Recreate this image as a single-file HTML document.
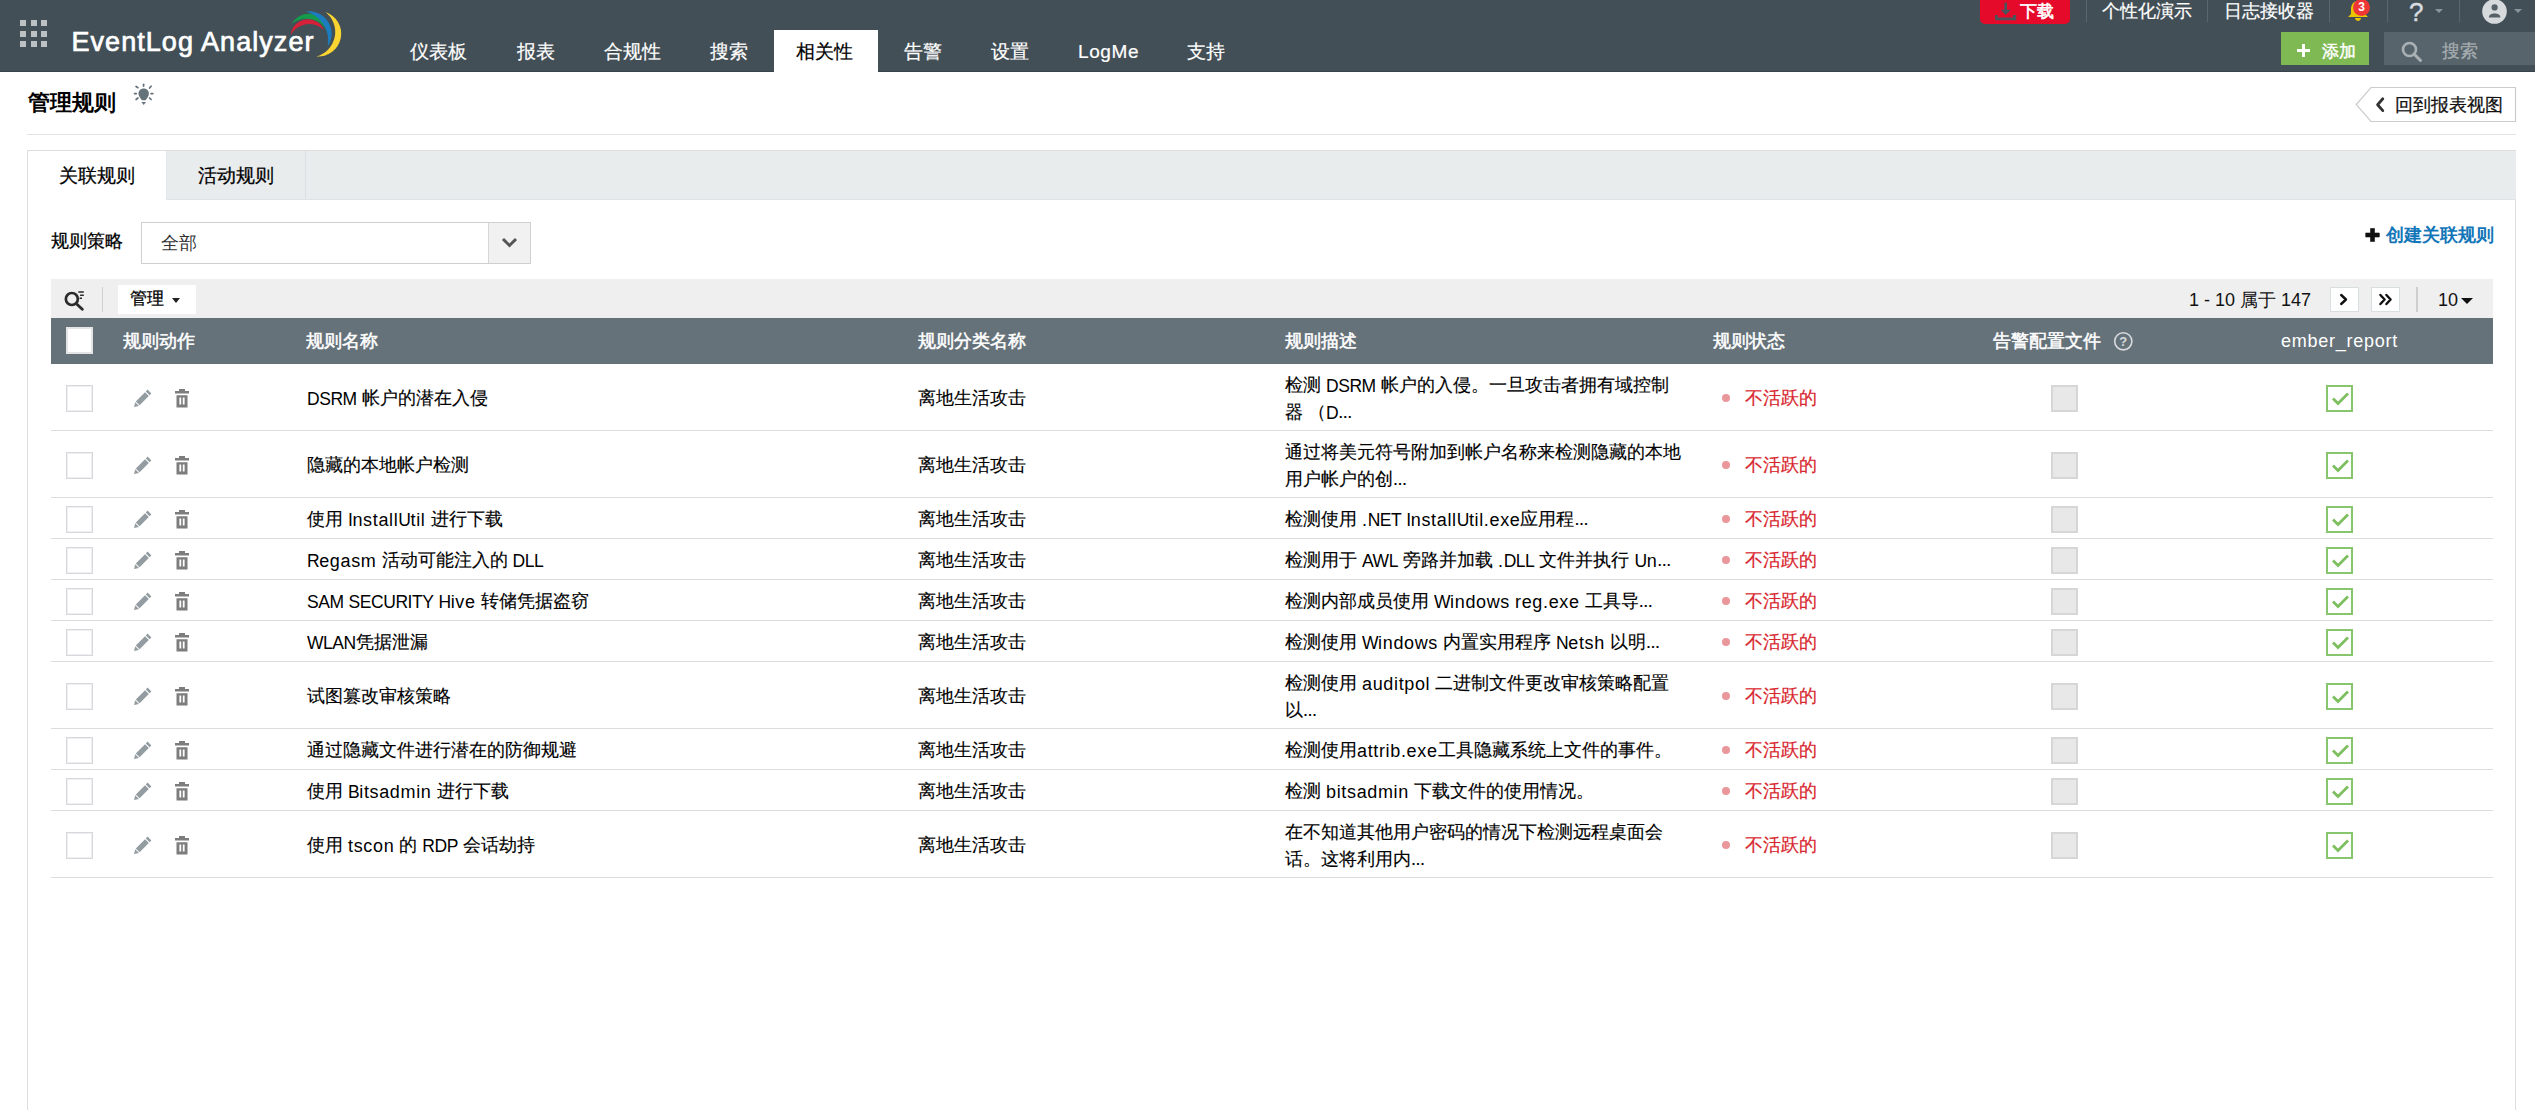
<!DOCTYPE html>
<html><head><meta charset="utf-8">
<style>
*{box-sizing:border-box;margin:0;padding:0}
html,body{width:2535px;height:1110px;overflow:hidden;background:#fff;font-family:"Liberation Sans",sans-serif;color:#222}
.a{position:absolute;white-space:nowrap}
#hdr{position:absolute;left:0;top:0;width:2535px;height:72px;background:#434f56;border-bottom:1px solid #38434a}
.dot{position:absolute;width:6px;height:6px;background:#bcc1c4}
.nav{position:absolute;top:30px;height:42px;font-size:19px;line-height:44px;color:#fff;white-space:nowrap;-webkit-text-stroke:0.2px currentColor}
.nav.act{background:#fff;color:#000}
.sep{position:absolute;top:0;width:1px;height:22px;background:#5a656d}
.tl{font-size:18px;line-height:22px;color:#fff;-webkit-text-stroke:0.2px currentColor}
.t18{font-size:18px;line-height:22px;-webkit-text-stroke:0.25px currentColor}
#panel{position:absolute;left:27px;top:150px;width:2489px;height:1000px;border:1px solid #dedede;background:#fff}
#tabs{position:absolute;left:138px;top:0;width:2350px;height:49px;background:#e9eced;border-bottom:1px solid #dfe3e5;border-left:1px solid #e3e6e8}
.hd{position:absolute;top:0;font-size:18px;line-height:46px;color:#fff;white-space:nowrap;-webkit-text-stroke:0.5px #fff}
.row{position:absolute;left:51px;width:2442px;border-bottom:1px solid #dcdcdc}
.cb{position:absolute;left:15px;width:27px;height:27px;border:1px solid #d9d7db;box-shadow:inset 0 0 0 1px #efeef0;background:#fff}
.ed{position:absolute;left:83px}
.tr{position:absolute;left:124px}
.l{position:relative;top:0.5px;-webkit-text-stroke:0}.u{font-style:normal;font-size:17.5px;letter-spacing:-0.45px}.w{font-weight:normal;letter-spacing:0.65px}.d{font-weight:normal;letter-spacing:-0.5px}
.c{position:absolute;font-size:18px;line-height:27px;color:#000;white-space:nowrap;-webkit-text-stroke:0.15px #000}
.st{position:absolute;left:1694px;font-size:18px;line-height:27px;color:#d8262e;white-space:nowrap;-webkit-text-stroke:0.2px #d8262e}
.st:before{content:"";position:absolute;left:-23px;top:9px;width:8px;height:8px;border-radius:50%;background:#ea979b}
.ac{position:absolute;left:2000px;width:27px;height:27px;border:2px solid #d6d6d6;background:#e8e8e8}
.gc{position:absolute;left:2275px;width:27px;height:27px;border:2px solid #88c66e;background:#fff}
</style></head><body>
<div id="hdr">
  <div class="dot" style="left:20px;top:20px"></div><div class="dot" style="left:30.5px;top:20px"></div><div class="dot" style="left:41px;top:20px"></div>
  <div class="dot" style="left:20px;top:30.5px"></div><div class="dot" style="left:30.5px;top:30.5px"></div><div class="dot" style="left:41px;top:30.5px"></div>
  <div class="dot" style="left:20px;top:41px"></div><div class="dot" style="left:30.5px;top:41px"></div><div class="dot" style="left:41px;top:41px"></div>
  <div class="a" id="logo" style="left:71.5px;top:25px;font-size:27px;line-height:34px;color:#fff;-webkit-text-stroke:0.7px #fff;letter-spacing:1.05px">EventLog Analyzer</div>
  <svg class="a" style="left:280px;top:5px" width="70" height="60" viewBox="0 0 70 60">
    <path d="M10.8 29.7 A17.2 17.2 0 0 1 43.8 24.9 A21 21 0 0 0 10.8 29.7Z" fill="#d4213a"/>
    <path d="M11.6 18.9 A19.8 19.8 0 0 1 48.6 29.5 A23.5 23.5 0 0 0 11.6 18.9Z" fill="#159a4c"/>
    <path d="M25.9 6.5 A22.5 22.5 0 0 1 47.6 41.6 A30 30 0 0 0 25.9 6.5Z" fill="#1b7dc0"/>
    <path d="M45.4 7 A22.8 22.8 0 0 1 36.2 51.4 A25.2 25.2 0 0 0 45.4 7Z" fill="#fbd432"/>
  </svg>
  <div class="nav" style="left:388px;padding:0 22px">仪表板</div>
  <div class="nav" style="left:495px;padding:0 22px">报表</div>
  <div class="nav" style="left:582px;padding:0 22px">合规性</div>
  <div class="nav" style="left:688px;padding:0 22px">搜索</div>
  <div class="nav act" style="left:774px;width:104px;padding:0 22px">相关性</div>
  <div class="nav" style="left:882px;padding:0 22px">告警</div>
  <div class="nav" style="left:969px;padding:0 22px">设置</div>
  <div class="nav" style="left:1056px;padding:0 22px;letter-spacing:0.6px">LogMe</div>
  <div class="nav" style="left:1165px;padding:0 22px">支持</div>

  <div class="a" style="left:1980px;top:0;width:90px;height:24px;background:#e5092a;border-radius:0 0 5px 5px"></div>
  <svg class="a" style="left:1995px;top:2px" width="22" height="19" viewBox="0 0 22 19">
    <rect x="9.4" y="0.6" width="2.6" height="8" fill="#4a545b"/><path d="M5.8 7.7 L16 7.7 L10.7 12.9Z" fill="#4a545b"/>
    <path d="M0.1 12.9 H2.7 V15.4 H18 V12.9 H21.2 V18.2 H0.1Z" fill="#4a545b"/>
  </svg>
  <div class="a tl" style="left:2020px;top:0px;font-size:16.5px;-webkit-text-stroke:0.6px #fff">下载</div>
  <div class="sep" style="left:2086px"></div>
  <div class="a tl" style="left:2102px;top:0px">个性化演示</div>
  <div class="sep" style="left:2207px"></div>
  <div class="a tl" style="left:2224px;top:0px">日志接收器</div>
  <div class="sep" style="left:2329px"></div>
  <svg class="a" style="left:2346px;top:0px" width="24" height="22" viewBox="0 0 24 22">
    <path d="M11 1 C 6 2, 5 6, 5 10 L 5 14 L 2 17 L 22 17 L 19 14 L 19 10 C 19 6, 17 2, 13 1Z" fill="#eac600"/>
    <path d="M9 18 H15 C15 20, 13 21, 12 21 C 11 21, 9 20, 9 18Z" fill="#eac600"/>
  </svg>
  <div class="a" style="left:2353px;top:-1px;width:17px;height:17px;border-radius:50%;background:#ee3636;color:#fff;font-size:12px;font-weight:bold;line-height:17px;text-align:center">3</div>
  <div class="sep" style="left:2387px"></div>
  <div class="a" style="left:2409px;top:-1px;font-size:26px;line-height:27px;color:#d9dde0;-webkit-text-stroke:0.4px #d9dde0">?</div>
  <div class="a" style="left:2435px;top:9px;width:0;height:0;border-left:4px solid transparent;border-right:4px solid transparent;border-top:4px solid #8a949a"></div>
  <div class="sep" style="left:2459px"></div>
  <svg class="a" style="left:2482px;top:-1px" width="25" height="25" viewBox="0 0 25 25">
    <circle cx="12.5" cy="12.5" r="12.3" fill="#d6dadd"/>
    <circle cx="12.6" cy="8.4" r="3.1" fill="#566067"/>
    <path d="M6.8 18.6 C 6.8 15.6, 9.4 14.4, 12.6 14.4 C 15.8 14.4, 18.4 15.6, 18.4 18.6Z" fill="#566067"/>
  </svg>
  <div class="a" style="left:2514px;top:9px;width:0;height:0;border-left:4px solid transparent;border-right:4px solid transparent;border-top:4px solid #8a949a"></div>

  <div class="a" style="left:2281px;top:32px;width:88px;height:33px;background:#7fb953"></div>
  <div class="a" style="left:2297px;top:49px;width:13px;height:3px;background:#fff"></div>
  <div class="a" style="left:2302px;top:44px;width:3px;height:13px;background:#fff"></div>
  <div class="a tl" style="left:2321.5px;top:39.5px;font-size:16.5px;-webkit-text-stroke:0.45px #fff">添加</div>
  <div class="a" style="left:2384px;top:32px;width:151px;height:33px;background:#58646b"></div>
  <svg class="a" style="left:2401px;top:41px" width="22" height="22" viewBox="0 0 22 22">
    <circle cx="8.5" cy="8.5" r="6.5" fill="none" stroke="#aab1b5" stroke-width="2.6"/>
    <path d="M13 13 L19.5 19.5" stroke="#aab1b5" stroke-width="3" stroke-linecap="round"/>
  </svg>
  <div class="a tl" style="left:2441.5px;top:40px;color:#a7aeb2">搜索</div>
</div>

<div class="a" style="left:27.5px;top:89px;font-size:22px;line-height:28px;font-weight:bold;color:#000">管理规则</div>
<svg class="a" style="left:133px;top:82px" width="22" height="25" viewBox="0 0 22 25">
  <g stroke="#67737b" stroke-width="1.7" stroke-linecap="round">
    <path d="M10.6 2.3 V4.1"/><path d="M1.5 11.6 H3.3"/><path d="M18 11.6 H19.8"/>
    <path d="M3.1 4.5 L4.9 5.7"/><path d="M18.1 4.2 L16.6 6"/><path d="M3.1 17.5 L4.9 16"/><path d="M18.1 17.5 L16.6 16"/>
  </g>
  <path d="M10.7 6.4 C 7.7 6.4, 5.5 8.6, 5.5 11.4 C 5.5 13.6, 6.6 14.6, 7.6 16.4 L 8.9 18.2 H 12.6 L 13.9 16.4 C 14.9 14.6, 15.9 13.6, 15.9 11.4 C 15.9 8.6, 13.7 6.4, 10.7 6.4 Z" fill="#67737b"/>
  <path d="M8.4 19.9 H13 L10.7 23.1Z" fill="#67737b"/>
</svg>
<div class="a" style="left:27px;top:134px;width:2489px;height:1px;background:#e2e2e2"></div>
<svg class="a" style="left:2355px;top:86px" width="162" height="37" viewBox="0 0 162 37">
  <path d="M16 1.5 H160.5 V35.5 H16 L1.2 18.5Z" fill="#fff" stroke="#cccccc" stroke-width="1.2"/>
  <path d="M27.8 12.8 L22.6 18.7 L27.8 24.6" fill="none" stroke="#333" stroke-width="2.8" stroke-linecap="round" stroke-linejoin="round"/>
</svg>
<div class="a t18" style="left:2395px;top:94px;color:#111">回到报表视图</div>

<div id="panel">
  <div id="tabs"></div>
  <div class="a" style="left:277px;top:0;width:1px;height:48px;background:#dcdfe1"></div>
  <div class="a" style="left:31px;top:14px;font-size:19px;line-height:22px;color:#000;-webkit-text-stroke:0.25px #000">关联规则</div>
  <div class="a" style="left:170px;top:14px;font-size:19px;line-height:22px;color:#000;-webkit-text-stroke:0.25px #000">活动规则</div>
</div>

<div class="a t18" style="left:51px;top:230px;color:#000">规则策略</div>
<div class="a" style="left:141px;top:222px;width:390px;height:42px;border:1px solid #cfcfcf;background:#fff"></div>
<div class="a" style="left:488px;top:223px;width:42px;height:40px;background:#f1f1f1;border-left:1px solid #d6d6d6"></div>
<svg class="a" style="left:501px;top:237px" width="17" height="11" viewBox="0 0 17 11"><path d="M2 2 L8.5 8.5 L15 2" fill="none" stroke="#555" stroke-width="3"/></svg>
<div class="a t18" style="left:161px;top:232px;color:#333;-webkit-text-stroke:0">全部</div>

<svg class="a" style="left:2365px;top:228px" width="15" height="14" viewBox="0 0 15 14"><path d="M5.5 0.5 H9.5 V5 H14.3 V9 H9.5 V13.6 H5.5 V9 H0.7 V5 H5.5Z" fill="#111" stroke="#111" stroke-width="0.6" stroke-linejoin="round"/></svg>
<div class="a t18" style="left:2386px;top:224px;color:#1276b8;font-weight:bold;-webkit-text-stroke:0">创建关联规则</div>

<div class="a" style="left:51px;top:279px;width:2442px;height:39px;background:#efefef"></div>
<svg class="a" style="left:63px;top:290px" width="23" height="22" viewBox="0 0 23 22">
  <circle cx="8.85" cy="9" r="6" fill="none" stroke="#2b2b2b" stroke-width="2.7"/>
  <path d="M14.2 14.5 L19.3 19.2" stroke="#2b2b2b" stroke-width="2.9" stroke-linecap="round"/>
  <path d="M15.3 2.1 H20.8 M17.1 5.2 H20.8 M16.6 8.2 H19" stroke="#2b2b2b" stroke-width="1.5"/>
</svg>
<div class="a" style="left:102px;top:287px;width:1px;height:25px;background:#cfcfcf"></div>
<div class="a" style="left:118px;top:285px;width:78px;height:29px;background:#fff"></div>
<div class="a" style="left:130px;top:288px;font-size:17px;line-height:22px;color:#000;-webkit-text-stroke:0.3px #000">管理</div>
<div class="a" style="left:172px;top:298px;width:0;height:0;border-left:4px solid transparent;border-right:4px solid transparent;border-top:5px solid #222"></div>

<div class="a t18" style="left:2189px;top:289px;color:#111;-webkit-text-stroke:0">1 - 10 属于 147</div>
<div class="a" style="left:2330px;top:287px;width:29px;height:25px;background:#fff;border:1px solid #d9dee0"></div>
<svg class="a" style="left:2338px;top:293px" width="12" height="13" viewBox="0 0 12 13"><path d="M3.2 2 L8 6.5 L3.2 11" fill="none" stroke="#111" stroke-width="2.4" stroke-linecap="round" stroke-linejoin="round"/></svg>
<div class="a" style="left:2371px;top:287px;width:29px;height:25px;background:#fff;border:1px solid #d9dee0"></div>
<svg class="a" style="left:2378px;top:293px" width="16" height="13" viewBox="0 0 16 13"><path d="M2.4 2 L6.6 6.5 L2.4 11 M8.4 2 L12.6 6.5 L8.4 11" fill="none" stroke="#111" stroke-width="2.4" stroke-linecap="round" stroke-linejoin="round"/></svg>
<div class="a" style="left:2416px;top:287px;width:2px;height:25px;background:#cfcfcf"></div>
<div class="a t18" style="left:2438px;top:289px;color:#111;-webkit-text-stroke:0">10</div>
<div class="a" style="left:2461px;top:298px;width:0;height:0;border-left:6px solid transparent;border-right:6px solid transparent;border-top:6px solid #111"></div>

<div class="a" style="left:51px;top:318px;width:2442px;height:46px;background:#66727a"></div>
<div class="a" style="left:66px;top:327px;width:27px;height:27px;background:#fff;border:2px solid #e4e4e4"></div>
<div class="hd" style="left:123px;top:318px">规则动作</div>
<div class="hd" style="left:306px;top:318px">规则名称</div>
<div class="hd" style="left:918px;top:318px">规则分类名称</div>
<div class="hd" style="left:1285px;top:318px">规则描述</div>
<div class="hd" style="left:1713px;top:318px">规则状态</div>
<div class="hd" style="left:1993px;top:318px">告警配置文件</div>
<svg class="a" style="left:2113px;top:331px" width="21" height="21" viewBox="0 0 21 21"><circle cx="10.3" cy="10.3" r="8.6" fill="none" stroke="#d7dbdd" stroke-width="1.6"/><text x="10.3" y="15" text-anchor="middle" font-family="Liberation Sans" font-weight="bold" font-size="13" fill="#d7dbdd">?</text></svg>
<div class="hd" style="left:2281px;top:318px;-webkit-text-stroke:0;letter-spacing:0.75px">ember_report</div>

<div class="row" style="top:364px;height:67px"><div class="cb" style="top:21px"></div><svg class="ed" width="18" height="18" viewBox="0 0 18 18" style="top:25px"><path d="M13.6 0.6 L17.4 4.4 L15.6 6.2 L11.8 2.4Z M11 3.2 L14.8 7 L5.6 16.2 L1.8 12.4Z M1.2 13.2 L5 17 L0 18Z" fill="#939ca1"/></svg><svg class="tr" width="14" height="19" viewBox="0 0 14 19" style="top:25px"><path d="M4 0 H10 V2 H14 V4.6 H0 V2 H4Z" fill="#7d7d7d"/><path d="M1.5 6.2 H12.5 V18.4 H1.5Z M4.4 8.6 V15.6 H6.2 V8.6Z M7.8 8.6 V15.6 H9.6 V8.6Z" fill="#7d7d7d" fill-rule="evenodd"/></svg><div class="c" style="left:256px;top:21px"><span class="l"><i class="u">DSRM</i> </span>帐户的潜在入侵</div><div class="c" style="left:867px;top:21px">离地生活攻击</div><div class="c" style="left:1234px;top:8px">检测 <span class="l"><i class="u">DSRM</i> </span>帐户的入侵。一旦攻击者拥有域控制<br>器 （<span class="l"><i class="u">D</i></span><b class="d">...</b></div><div class="st" style="top:21px">不活跃的</div><div class="ac" style="top:21px"></div><div class="gc" style="top:21px"></div><svg class="a" style="left:2279px;top:24px" width="21" height="21" viewBox="0 0 21 21"><path d="M3 10.5 L8 15.5 L18 5.5" fill="none" stroke="#7dbf5e" stroke-width="2.7"/></svg></div>
<div class="row" style="top:431px;height:67px"><div class="cb" style="top:21px"></div><svg class="ed" width="18" height="18" viewBox="0 0 18 18" style="top:25px"><path d="M13.6 0.6 L17.4 4.4 L15.6 6.2 L11.8 2.4Z M11 3.2 L14.8 7 L5.6 16.2 L1.8 12.4Z M1.2 13.2 L5 17 L0 18Z" fill="#939ca1"/></svg><svg class="tr" width="14" height="19" viewBox="0 0 14 19" style="top:25px"><path d="M4 0 H10 V2 H14 V4.6 H0 V2 H4Z" fill="#7d7d7d"/><path d="M1.5 6.2 H12.5 V18.4 H1.5Z M4.4 8.6 V15.6 H6.2 V8.6Z M7.8 8.6 V15.6 H9.6 V8.6Z" fill="#7d7d7d" fill-rule="evenodd"/></svg><div class="c" style="left:256px;top:21px">隐藏的本地帐户检测</div><div class="c" style="left:867px;top:21px">离地生活攻击</div><div class="c" style="left:1234px;top:8px">通过将美元符号附加到帐户名称来检测隐藏的本地<br>用户帐户的创<b class="d">...</b></div><div class="st" style="top:21px">不活跃的</div><div class="ac" style="top:21px"></div><div class="gc" style="top:21px"></div><svg class="a" style="left:2279px;top:24px" width="21" height="21" viewBox="0 0 21 21"><path d="M3 10.5 L8 15.5 L18 5.5" fill="none" stroke="#7dbf5e" stroke-width="2.7"/></svg></div>
<div class="row" style="top:498px;height:41px"><div class="cb" style="top:8px"></div><svg class="ed" width="18" height="18" viewBox="0 0 18 18" style="top:12px"><path d="M13.6 0.6 L17.4 4.4 L15.6 6.2 L11.8 2.4Z M11 3.2 L14.8 7 L5.6 16.2 L1.8 12.4Z M1.2 13.2 L5 17 L0 18Z" fill="#939ca1"/></svg><svg class="tr" width="14" height="19" viewBox="0 0 14 19" style="top:12px"><path d="M4 0 H10 V2 H14 V4.6 H0 V2 H4Z" fill="#7d7d7d"/><path d="M1.5 6.2 H12.5 V18.4 H1.5Z M4.4 8.6 V15.6 H6.2 V8.6Z M7.8 8.6 V15.6 H9.6 V8.6Z" fill="#7d7d7d" fill-rule="evenodd"/></svg><div class="c" style="left:256px;top:8px">使用 <span class="l"><i class="u">I</i><b class="w">nstall</b><i class="u">U</i><b class="w">til</b> </span>进行下载</div><div class="c" style="left:867px;top:8px">离地生活攻击</div><div class="c" style="left:1234px;top:8px">检测使用 <span class="l"><b class="w">.</b><i class="u">NET</i> <i class="u">I</i><b class="w">nstall</b><i class="u">U</i><b class="w">til.exe</b></span>应用程<b class="d">...</b></div><div class="st" style="top:8px">不活跃的</div><div class="ac" style="top:8px"></div><div class="gc" style="top:8px"></div><svg class="a" style="left:2279px;top:11px" width="21" height="21" viewBox="0 0 21 21"><path d="M3 10.5 L8 15.5 L18 5.5" fill="none" stroke="#7dbf5e" stroke-width="2.7"/></svg></div>
<div class="row" style="top:539px;height:41px"><div class="cb" style="top:8px"></div><svg class="ed" width="18" height="18" viewBox="0 0 18 18" style="top:12px"><path d="M13.6 0.6 L17.4 4.4 L15.6 6.2 L11.8 2.4Z M11 3.2 L14.8 7 L5.6 16.2 L1.8 12.4Z M1.2 13.2 L5 17 L0 18Z" fill="#939ca1"/></svg><svg class="tr" width="14" height="19" viewBox="0 0 14 19" style="top:12px"><path d="M4 0 H10 V2 H14 V4.6 H0 V2 H4Z" fill="#7d7d7d"/><path d="M1.5 6.2 H12.5 V18.4 H1.5Z M4.4 8.6 V15.6 H6.2 V8.6Z M7.8 8.6 V15.6 H9.6 V8.6Z" fill="#7d7d7d" fill-rule="evenodd"/></svg><div class="c" style="left:256px;top:8px"><span class="l"><i class="u">R</i><b class="w">egasm</b> </span>活动可能注入的 <span class="l"><i class="u">DLL</i></span></div><div class="c" style="left:867px;top:8px">离地生活攻击</div><div class="c" style="left:1234px;top:8px">检测用于 <span class="l"><i class="u">AWL</i> </span>旁路并加载 <span class="l"><b class="w">.</b><i class="u">DLL</i> </span>文件并执行 <span class="l"><i class="u">U</i><b class="w">n</b></span><b class="d">...</b></div><div class="st" style="top:8px">不活跃的</div><div class="ac" style="top:8px"></div><div class="gc" style="top:8px"></div><svg class="a" style="left:2279px;top:11px" width="21" height="21" viewBox="0 0 21 21"><path d="M3 10.5 L8 15.5 L18 5.5" fill="none" stroke="#7dbf5e" stroke-width="2.7"/></svg></div>
<div class="row" style="top:580px;height:41px"><div class="cb" style="top:8px"></div><svg class="ed" width="18" height="18" viewBox="0 0 18 18" style="top:12px"><path d="M13.6 0.6 L17.4 4.4 L15.6 6.2 L11.8 2.4Z M11 3.2 L14.8 7 L5.6 16.2 L1.8 12.4Z M1.2 13.2 L5 17 L0 18Z" fill="#939ca1"/></svg><svg class="tr" width="14" height="19" viewBox="0 0 14 19" style="top:12px"><path d="M4 0 H10 V2 H14 V4.6 H0 V2 H4Z" fill="#7d7d7d"/><path d="M1.5 6.2 H12.5 V18.4 H1.5Z M4.4 8.6 V15.6 H6.2 V8.6Z M7.8 8.6 V15.6 H9.6 V8.6Z" fill="#7d7d7d" fill-rule="evenodd"/></svg><div class="c" style="left:256px;top:8px"><span class="l"><i class="u">SAM</i> <i class="u">SECURITY</i> <i class="u">H</i><b class="w">ive</b> </span>转储凭据盗窃</div><div class="c" style="left:867px;top:8px">离地生活攻击</div><div class="c" style="left:1234px;top:8px">检测内部成员使用 <span class="l"><i class="u">W</i><b class="w">indows</b> <b class="w">reg.exe</b> </span>工具导<b class="d">...</b></div><div class="st" style="top:8px">不活跃的</div><div class="ac" style="top:8px"></div><div class="gc" style="top:8px"></div><svg class="a" style="left:2279px;top:11px" width="21" height="21" viewBox="0 0 21 21"><path d="M3 10.5 L8 15.5 L18 5.5" fill="none" stroke="#7dbf5e" stroke-width="2.7"/></svg></div>
<div class="row" style="top:621px;height:41px"><div class="cb" style="top:8px"></div><svg class="ed" width="18" height="18" viewBox="0 0 18 18" style="top:12px"><path d="M13.6 0.6 L17.4 4.4 L15.6 6.2 L11.8 2.4Z M11 3.2 L14.8 7 L5.6 16.2 L1.8 12.4Z M1.2 13.2 L5 17 L0 18Z" fill="#939ca1"/></svg><svg class="tr" width="14" height="19" viewBox="0 0 14 19" style="top:12px"><path d="M4 0 H10 V2 H14 V4.6 H0 V2 H4Z" fill="#7d7d7d"/><path d="M1.5 6.2 H12.5 V18.4 H1.5Z M4.4 8.6 V15.6 H6.2 V8.6Z M7.8 8.6 V15.6 H9.6 V8.6Z" fill="#7d7d7d" fill-rule="evenodd"/></svg><div class="c" style="left:256px;top:8px"><span class="l"><i class="u">WLAN</i></span>凭据泄漏</div><div class="c" style="left:867px;top:8px">离地生活攻击</div><div class="c" style="left:1234px;top:8px">检测使用 <span class="l"><i class="u">W</i><b class="w">indows</b> </span>内置实用程序 <span class="l"><i class="u">N</i><b class="w">etsh</b> </span>以明<b class="d">...</b></div><div class="st" style="top:8px">不活跃的</div><div class="ac" style="top:8px"></div><div class="gc" style="top:8px"></div><svg class="a" style="left:2279px;top:11px" width="21" height="21" viewBox="0 0 21 21"><path d="M3 10.5 L8 15.5 L18 5.5" fill="none" stroke="#7dbf5e" stroke-width="2.7"/></svg></div>
<div class="row" style="top:662px;height:67px"><div class="cb" style="top:21px"></div><svg class="ed" width="18" height="18" viewBox="0 0 18 18" style="top:25px"><path d="M13.6 0.6 L17.4 4.4 L15.6 6.2 L11.8 2.4Z M11 3.2 L14.8 7 L5.6 16.2 L1.8 12.4Z M1.2 13.2 L5 17 L0 18Z" fill="#939ca1"/></svg><svg class="tr" width="14" height="19" viewBox="0 0 14 19" style="top:25px"><path d="M4 0 H10 V2 H14 V4.6 H0 V2 H4Z" fill="#7d7d7d"/><path d="M1.5 6.2 H12.5 V18.4 H1.5Z M4.4 8.6 V15.6 H6.2 V8.6Z M7.8 8.6 V15.6 H9.6 V8.6Z" fill="#7d7d7d" fill-rule="evenodd"/></svg><div class="c" style="left:256px;top:21px">试图篡改审核策略</div><div class="c" style="left:867px;top:21px">离地生活攻击</div><div class="c" style="left:1234px;top:8px">检测使用 <span class="l"><b class="w">auditpol</b> </span>二进制文件更改审核策略配置<br>以<b class="d">...</b></div><div class="st" style="top:21px">不活跃的</div><div class="ac" style="top:21px"></div><div class="gc" style="top:21px"></div><svg class="a" style="left:2279px;top:24px" width="21" height="21" viewBox="0 0 21 21"><path d="M3 10.5 L8 15.5 L18 5.5" fill="none" stroke="#7dbf5e" stroke-width="2.7"/></svg></div>
<div class="row" style="top:729px;height:41px"><div class="cb" style="top:8px"></div><svg class="ed" width="18" height="18" viewBox="0 0 18 18" style="top:12px"><path d="M13.6 0.6 L17.4 4.4 L15.6 6.2 L11.8 2.4Z M11 3.2 L14.8 7 L5.6 16.2 L1.8 12.4Z M1.2 13.2 L5 17 L0 18Z" fill="#939ca1"/></svg><svg class="tr" width="14" height="19" viewBox="0 0 14 19" style="top:12px"><path d="M4 0 H10 V2 H14 V4.6 H0 V2 H4Z" fill="#7d7d7d"/><path d="M1.5 6.2 H12.5 V18.4 H1.5Z M4.4 8.6 V15.6 H6.2 V8.6Z M7.8 8.6 V15.6 H9.6 V8.6Z" fill="#7d7d7d" fill-rule="evenodd"/></svg><div class="c" style="left:256px;top:8px">通过隐藏文件进行潜在的防御规避</div><div class="c" style="left:867px;top:8px">离地生活攻击</div><div class="c" style="left:1234px;top:8px">检测使用<span class="l"><b class="w">attrib.exe</b></span>工具隐藏系统上文件的事件。</div><div class="st" style="top:8px">不活跃的</div><div class="ac" style="top:8px"></div><div class="gc" style="top:8px"></div><svg class="a" style="left:2279px;top:11px" width="21" height="21" viewBox="0 0 21 21"><path d="M3 10.5 L8 15.5 L18 5.5" fill="none" stroke="#7dbf5e" stroke-width="2.7"/></svg></div>
<div class="row" style="top:770px;height:41px"><div class="cb" style="top:8px"></div><svg class="ed" width="18" height="18" viewBox="0 0 18 18" style="top:12px"><path d="M13.6 0.6 L17.4 4.4 L15.6 6.2 L11.8 2.4Z M11 3.2 L14.8 7 L5.6 16.2 L1.8 12.4Z M1.2 13.2 L5 17 L0 18Z" fill="#939ca1"/></svg><svg class="tr" width="14" height="19" viewBox="0 0 14 19" style="top:12px"><path d="M4 0 H10 V2 H14 V4.6 H0 V2 H4Z" fill="#7d7d7d"/><path d="M1.5 6.2 H12.5 V18.4 H1.5Z M4.4 8.6 V15.6 H6.2 V8.6Z M7.8 8.6 V15.6 H9.6 V8.6Z" fill="#7d7d7d" fill-rule="evenodd"/></svg><div class="c" style="left:256px;top:8px">使用 <span class="l"><i class="u">B</i><b class="w">itsadmin</b> </span>进行下载</div><div class="c" style="left:867px;top:8px">离地生活攻击</div><div class="c" style="left:1234px;top:8px">检测 <span class="l"><b class="w">bitsadmin</b> </span>下载文件的使用情况。</div><div class="st" style="top:8px">不活跃的</div><div class="ac" style="top:8px"></div><div class="gc" style="top:8px"></div><svg class="a" style="left:2279px;top:11px" width="21" height="21" viewBox="0 0 21 21"><path d="M3 10.5 L8 15.5 L18 5.5" fill="none" stroke="#7dbf5e" stroke-width="2.7"/></svg></div>
<div class="row" style="top:811px;height:67px"><div class="cb" style="top:21px"></div><svg class="ed" width="18" height="18" viewBox="0 0 18 18" style="top:25px"><path d="M13.6 0.6 L17.4 4.4 L15.6 6.2 L11.8 2.4Z M11 3.2 L14.8 7 L5.6 16.2 L1.8 12.4Z M1.2 13.2 L5 17 L0 18Z" fill="#939ca1"/></svg><svg class="tr" width="14" height="19" viewBox="0 0 14 19" style="top:25px"><path d="M4 0 H10 V2 H14 V4.6 H0 V2 H4Z" fill="#7d7d7d"/><path d="M1.5 6.2 H12.5 V18.4 H1.5Z M4.4 8.6 V15.6 H6.2 V8.6Z M7.8 8.6 V15.6 H9.6 V8.6Z" fill="#7d7d7d" fill-rule="evenodd"/></svg><div class="c" style="left:256px;top:21px">使用 <span class="l"><b class="w">tscon</b> </span>的 <span class="l"><i class="u">RDP</i> </span>会话劫持</div><div class="c" style="left:867px;top:21px">离地生活攻击</div><div class="c" style="left:1234px;top:8px">在不知道其他用户密码的情况下检测远程桌面会<br>话。这将利用内<b class="d">...</b></div><div class="st" style="top:21px">不活跃的</div><div class="ac" style="top:21px"></div><div class="gc" style="top:21px"></div><svg class="a" style="left:2279px;top:24px" width="21" height="21" viewBox="0 0 21 21"><path d="M3 10.5 L8 15.5 L18 5.5" fill="none" stroke="#7dbf5e" stroke-width="2.7"/></svg></div>
</body></html>
